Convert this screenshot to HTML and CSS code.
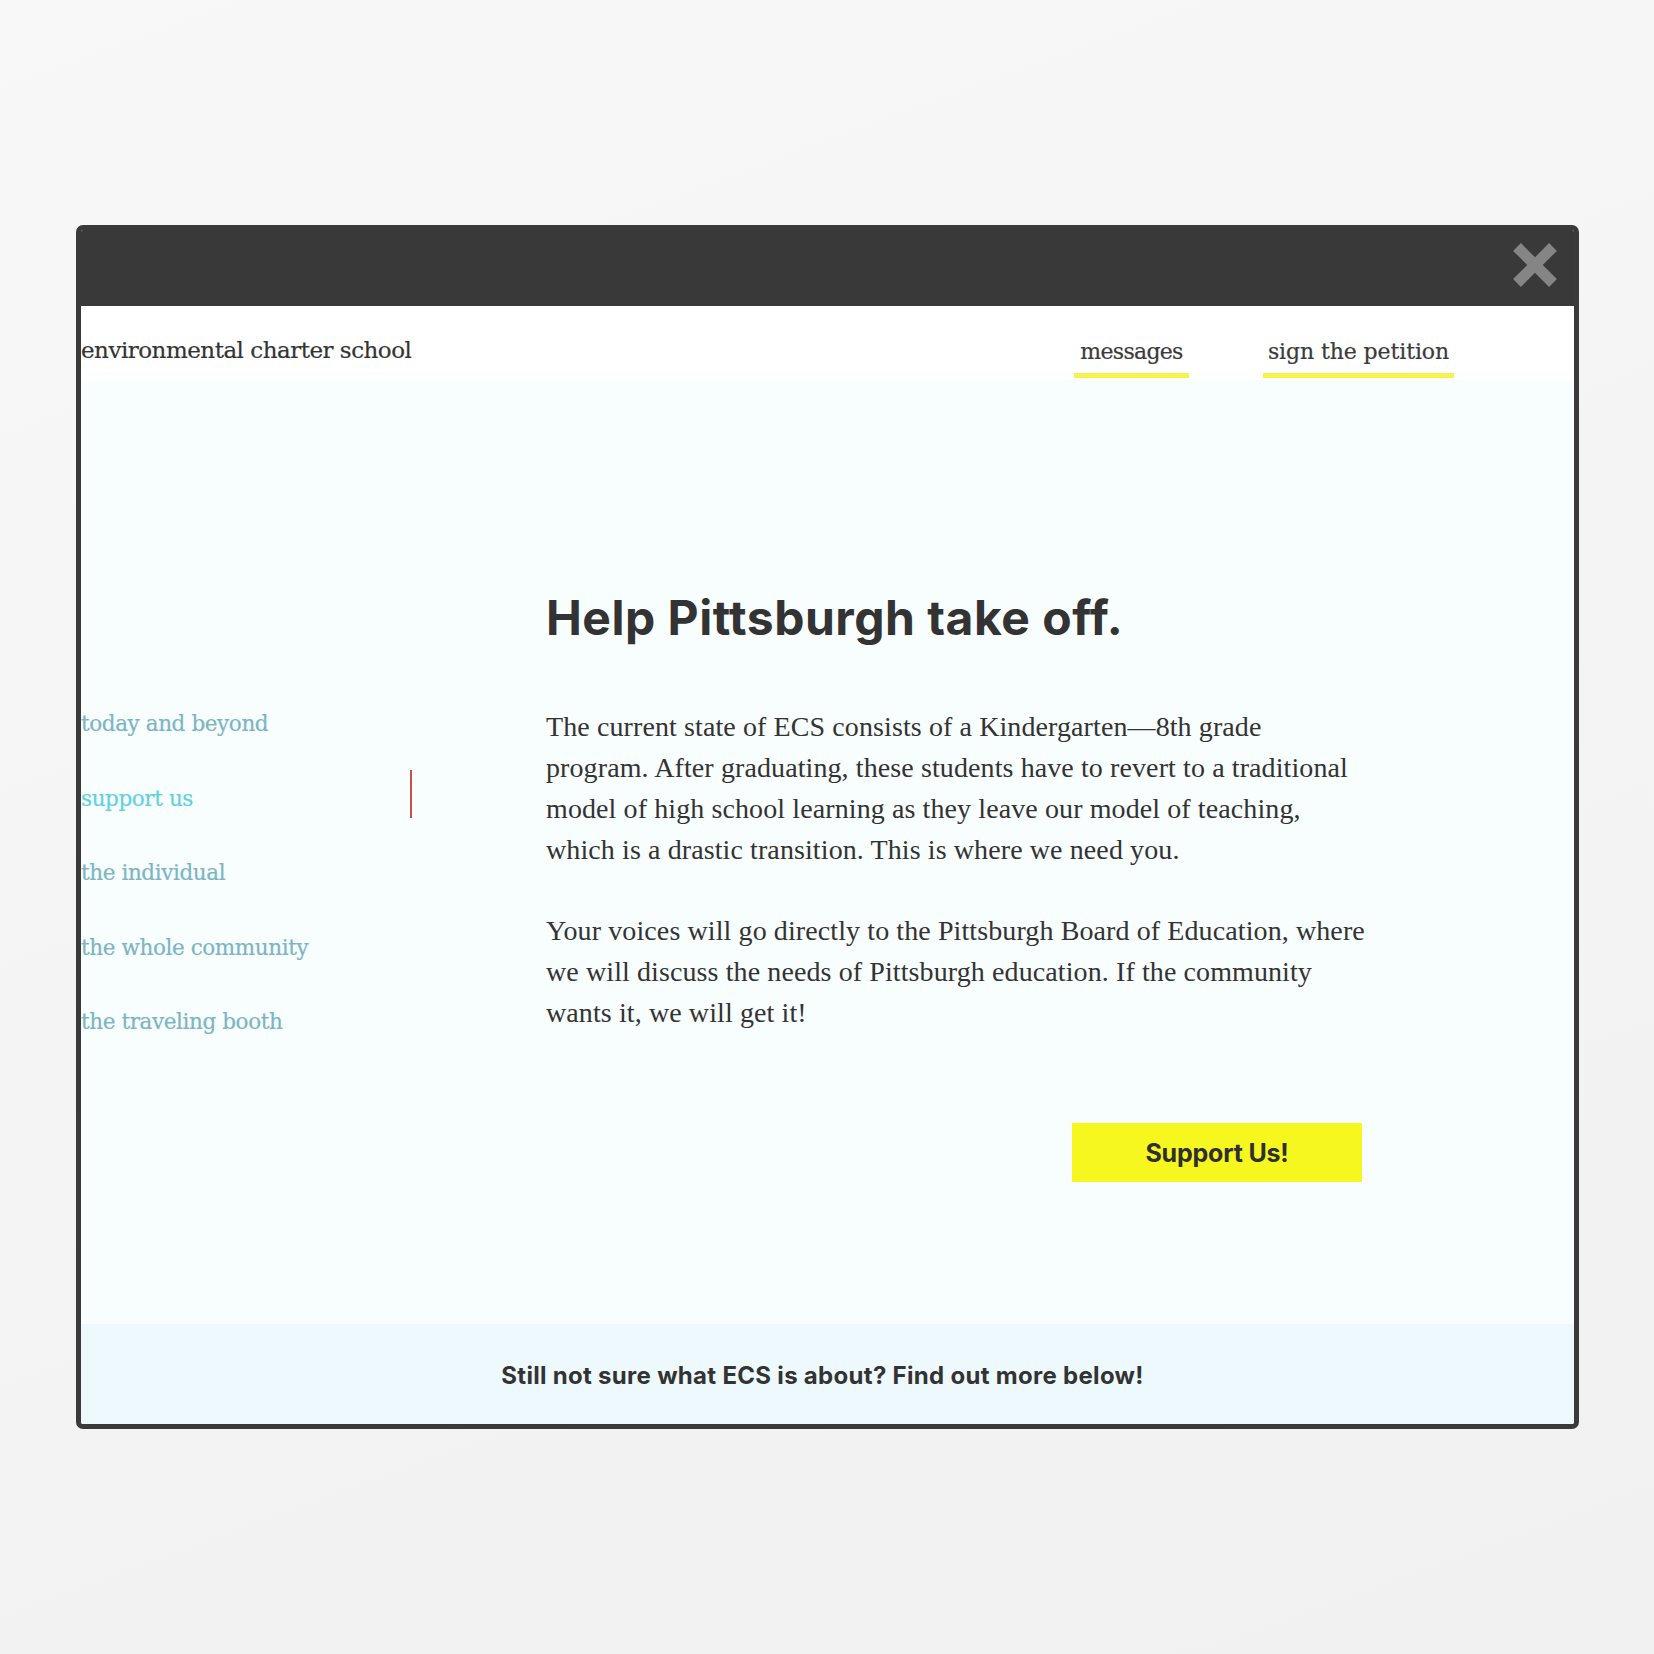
FILE: index.html
```html
<!DOCTYPE html>
<html lang="en">
<head>
<meta charset="utf-8">
<title>Help Pittsburgh take off.</title>
<link rel="stylesheet" href="styles.css">
</head>
<body>
<div class="window">
  <div class="titlebar">
    <svg class="close" width="44" height="44" viewBox="0 0 44 44" aria-label="close">
      <line x1="4" y1="4" x2="40" y2="40"/>
      <line x1="40" y1="4" x2="4" y2="40"/>
    </svg>
  </div>
  <header class="site-header">
    <div class="brand">environmental charter school</div>
    <nav class="top-nav">
      <a class="top-link link-messages">messages</a>
      <a class="top-link link-petition">sign the petition</a>
    </nav>
  </header>
  <main class="main">
    <aside class="sidebar">
      <a class="side-link">today and beyond</a>
      <a class="side-link active">support us</a>
      <a class="side-link">the individual</a>
      <a class="side-link">the whole community</a>
      <a class="side-link">the traveling booth</a>
    </aside>
    <section class="content">
      <h1 class="title">Help Pittsburgh take off.</h1>
      <p class="copy">The current state of ECS consists of a Kindergarten—8th grade<br>program. After graduating, these students have to revert to a traditional<br>model of high school learning as they leave our model of teaching,<br>which is a drastic transition. This is where we need you.</p>
      <p class="copy">Your voices will go directly to the Pittsburgh Board of Education, where<br>we will discuss the needs of Pittsburgh education. If the community<br>wants it, we will get it!</p>
      <div class="actions">
        <a class="cta">Support Us!</a>
      </div>
    </section>
  </main>
  <footer class="footer">Still not sure what ECS is about? Find out more below!</footer>
</div>
</body>
</html>
```
FILE: styles.css
```css
html, body {
  margin: 0;
  padding: 0;
}
body {
  width: 1654px;
  height: 1654px;
  background: linear-gradient(160deg, #f8f8f8 0%, #f4f4f4 50%, #f1f1f1 100%);
  overflow: hidden;
  padding-top: 225px;
  box-sizing: border-box;
}
.window {
  margin-left: 76px;
  width: 1503px;
  border: 5px solid #3a3a3a;
  border-radius: 7px;
  box-sizing: border-box;
  overflow: hidden;
  background: #f8fdfe;
}
.titlebar {
  height: 76px;
  background: #393939;
  display: flex;
  justify-content: flex-end;
  align-items: flex-start;
  padding: 13px 17px 0 0;
  box-sizing: border-box;
}
.close line {
  stroke: #858585;
  stroke-width: 11;
}
.site-header {
  height: 74px;
  background: #ffffff;
  display: flex;
  justify-content: space-between;
  align-items: flex-start;
  padding-right: 120px;
}
.brand {
  font-family: "DejaVu Serif", serif;
  font-size: 23px;
  line-height: 26px;
  padding-top: 31px;
  color: #333333;
  letter-spacing: -0.5px;
  -webkit-text-stroke: 0.2px #333333;
}
.top-nav {
  display: flex;
  gap: 74px;
}
.top-link {
  display: block;
  font-family: "DejaVu Serif", serif;
  font-size: 22px;
  line-height: 26px;
  padding-top: 33px;
  padding-bottom: 8px;
  border-bottom: 5px solid #f4f44c;
  color: #3a3a3a;
  text-align: center;
  letter-spacing: -0.1px;
  -webkit-text-stroke: 0.2px #3a3a3a;
}
.link-messages { width: 115px; letter-spacing: -0.7px; }
.link-petition { width: 191px; }
.main {
  height: 944px;
  display: grid;
  grid-template-columns: 465px 816px;
}
.sidebar {
  display: flex;
  flex-direction: column;
  align-items: flex-start;
  gap: 26.5px;
  padding-top: 315px;
}
.side-link {
  display: block;
  width: 331px;
  height: 48px;
  box-sizing: border-box;
  padding-top: 10px;
  line-height: 38px;
  font-family: "DejaVu Serif", serif;
  font-size: 21.5px;
  letter-spacing: -0.4px;
  color: #7cb5c2;
  -webkit-text-stroke: 0.2px #7cb5c2;
}
.side-link.active {
  color: #5fd1e1;
  -webkit-text-stroke: 0.2px #5fd1e1;
  border-right: 2px solid #c8504c;
}
.content {
  padding-top: 209px;
}
.title {
  margin: 0;
  font-family: "Inter", sans-serif;
  font-weight: 700;
  font-size: 48px;
  line-height: 58px;
  letter-spacing: 0.5px;
  color: #333333;
}
.copy {
  margin: 0 0 40px 0;
  font-family: "Liberation Serif", serif;
  font-size: 28px;
  line-height: 41px;
  letter-spacing: 0.1px;
  color: #333333;
  white-space: nowrap;
}
.title + .copy {
  margin-top: 59px;
}
.actions {
  display: flex;
  justify-content: flex-end;
  padding-top: 50px;
}
.cta {
  display: flex;
  align-items: center;
  justify-content: center;
  width: 290px;
  height: 59px;
  background: #f7f720;
  font-family: "Inter", sans-serif;
  font-weight: 700;
  font-size: 25px;
  letter-spacing: -0.2px;
  color: #2f2f2f;
}
.footer {
  height: 100px;
  background: #eef9fd;
  font-family: "Inter", sans-serif;
  font-weight: 700;
  font-size: 24px;
  letter-spacing: 0.3px;
  color: #333333;
  text-align: center;
  line-height: 100px;
  padding-top: 2px;
  padding-right: 10px;
  box-sizing: border-box;
}
```
